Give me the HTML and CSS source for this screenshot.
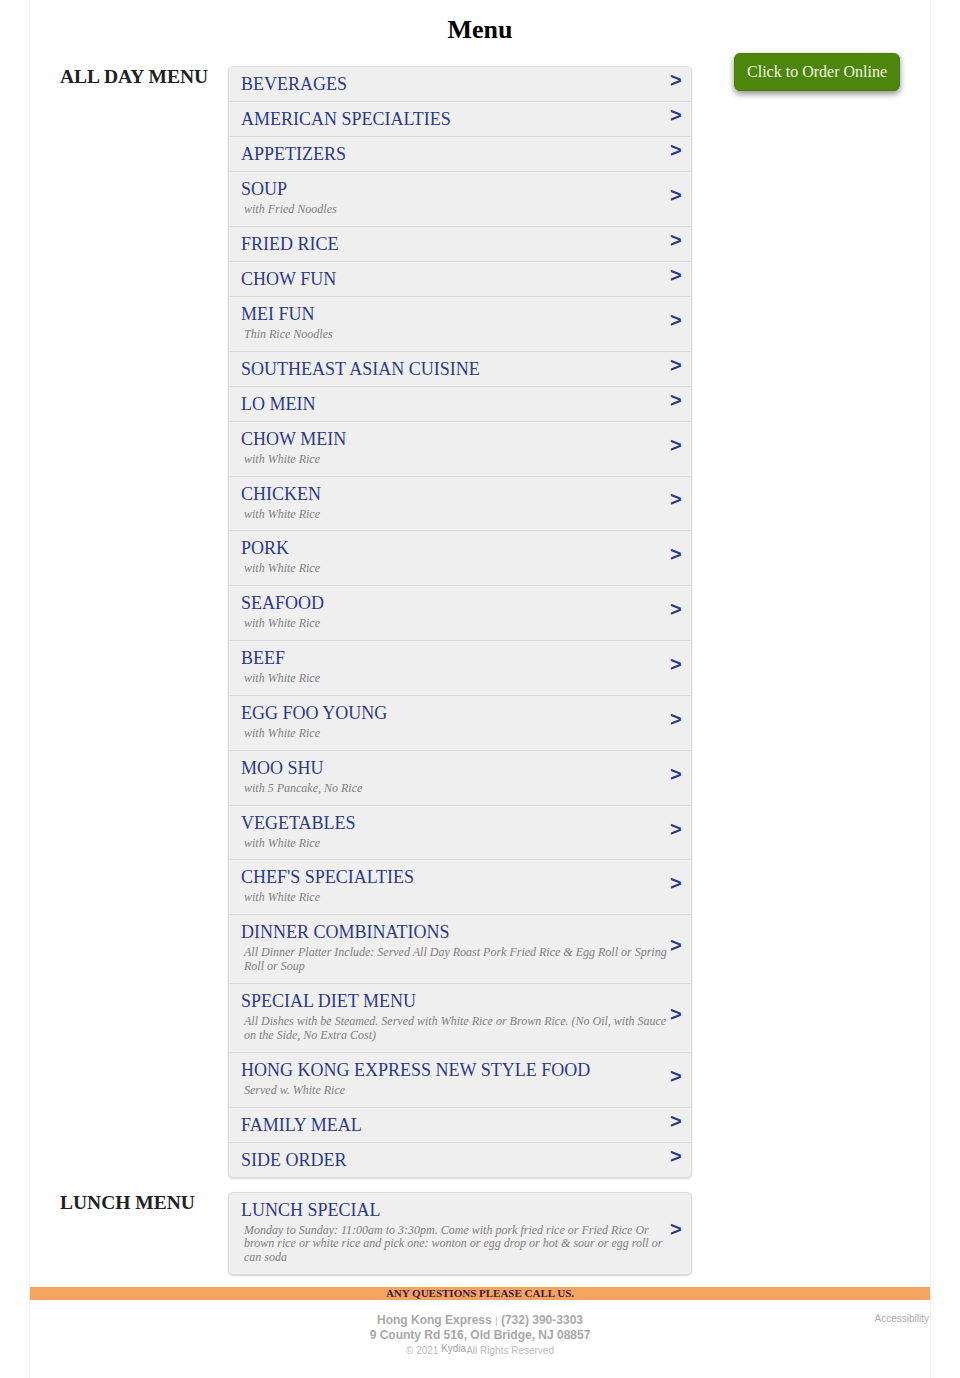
FILE: index.html
```html
<!DOCTYPE html>
<html lang="en">
<head>
<meta charset="utf-8">
<title>Menu - Hong Kong Express</title>
<link rel="stylesheet" href="styles.css">
</head>
<body>
<div class="page">
  <h1 class="page-title">Menu</h1>
  <div class="menu-body">
    <div class="sections">
      <section class="menu-section">
        <h2 class="section-name">ALL DAY MENU</h2>
        <ul class="cat-list">
          <li class="cat"><div class="cat-text"><div class="cat-name">BEVERAGES</div></div><span class="cat-arrow">&gt;</span></li>
          <li class="cat"><div class="cat-text"><div class="cat-name">AMERICAN SPECIALTIES</div></div><span class="cat-arrow">&gt;</span></li>
          <li class="cat"><div class="cat-text"><div class="cat-name">APPETIZERS</div></div><span class="cat-arrow">&gt;</span></li>
          <li class="cat"><div class="cat-text"><div class="cat-name">SOUP</div><div class="cat-desc">with Fried Noodles</div></div><span class="cat-arrow">&gt;</span></li>
          <li class="cat"><div class="cat-text"><div class="cat-name">FRIED RICE</div></div><span class="cat-arrow">&gt;</span></li>
          <li class="cat"><div class="cat-text"><div class="cat-name">CHOW FUN</div></div><span class="cat-arrow">&gt;</span></li>
          <li class="cat"><div class="cat-text"><div class="cat-name">MEI FUN</div><div class="cat-desc">Thin Rice Noodles</div></div><span class="cat-arrow">&gt;</span></li>
          <li class="cat"><div class="cat-text"><div class="cat-name">SOUTHEAST ASIAN CUISINE</div></div><span class="cat-arrow">&gt;</span></li>
          <li class="cat"><div class="cat-text"><div class="cat-name">LO MEIN</div></div><span class="cat-arrow">&gt;</span></li>
          <li class="cat"><div class="cat-text"><div class="cat-name">CHOW MEIN</div><div class="cat-desc">with White Rice</div></div><span class="cat-arrow">&gt;</span></li>
          <li class="cat"><div class="cat-text"><div class="cat-name">CHICKEN</div><div class="cat-desc">with White Rice</div></div><span class="cat-arrow">&gt;</span></li>
          <li class="cat"><div class="cat-text"><div class="cat-name">PORK</div><div class="cat-desc">with White Rice</div></div><span class="cat-arrow">&gt;</span></li>
          <li class="cat"><div class="cat-text"><div class="cat-name">SEAFOOD</div><div class="cat-desc">with White Rice</div></div><span class="cat-arrow">&gt;</span></li>
          <li class="cat"><div class="cat-text"><div class="cat-name">BEEF</div><div class="cat-desc">with White Rice</div></div><span class="cat-arrow">&gt;</span></li>
          <li class="cat"><div class="cat-text"><div class="cat-name">EGG FOO YOUNG</div><div class="cat-desc">with White Rice</div></div><span class="cat-arrow">&gt;</span></li>
          <li class="cat"><div class="cat-text"><div class="cat-name">MOO SHU</div><div class="cat-desc">with 5 Pancake, No Rice</div></div><span class="cat-arrow">&gt;</span></li>
          <li class="cat"><div class="cat-text"><div class="cat-name">VEGETABLES</div><div class="cat-desc">with White Rice</div></div><span class="cat-arrow">&gt;</span></li>
          <li class="cat"><div class="cat-text"><div class="cat-name">CHEF'S SPECIALTIES</div><div class="cat-desc">with White Rice</div></div><span class="cat-arrow">&gt;</span></li>
          <li class="cat"><div class="cat-text"><div class="cat-name">DINNER COMBINATIONS</div><div class="cat-desc">All Dinner Platter Include: Served All Day Roast Pork Fried Rice &amp; Egg Roll or Spring Roll or Soup</div></div><span class="cat-arrow">&gt;</span></li>
          <li class="cat"><div class="cat-text"><div class="cat-name">SPECIAL DIET MENU</div><div class="cat-desc">All Dishes with be Steamed. Served with White Rice or Brown Rice. (No Oil, with Sauce on the Side, No Extra Cost)</div></div><span class="cat-arrow">&gt;</span></li>
          <li class="cat"><div class="cat-text"><div class="cat-name">HONG KONG EXPRESS NEW STYLE FOOD</div><div class="cat-desc">Served w. White Rice</div></div><span class="cat-arrow">&gt;</span></li>
          <li class="cat"><div class="cat-text"><div class="cat-name">FAMILY MEAL</div></div><span class="cat-arrow">&gt;</span></li>
          <li class="cat"><div class="cat-text"><div class="cat-name">SIDE ORDER</div></div><span class="cat-arrow">&gt;</span></li>
        </ul>
      </section>
      <section class="menu-section">
        <h2 class="section-name">LUNCH MENU</h2>
        <ul class="cat-list">
          <li class="cat"><div class="cat-text"><div class="cat-name">LUNCH SPECIAL</div><div class="cat-desc">Monday to Sunday: 11:00am to 3:30pm. Come with pork fried rice or Fried Rice Or brown rice or white rice and pick one: wonton or egg drop or hot &amp; sour or egg roll or can soda</div></div><span class="cat-arrow">&gt;</span></li>
        </ul>
      </section>
    </div>
    <aside class="order">
      <a class="order-btn" href="#">Click to Order Online</a>
    </aside>
  </div>
  <div class="call-bar">ANY QUESTIONS PLEASE CALL US.</div>
  <footer class="site-footer">
    <div class="footer-spacer"></div>
    <div class="footer-info">
      <div class="footer-line">Hong Kong Express <span class="sep">|</span> (732) 390-3303</div>
      <div class="footer-line">9 County Rd 516, Old Bridge, NJ 08857</div>
      <div class="footer-copy">© 2021 <span class="kydia">Kydia</span>All Rights Reserved</div>
    </div>
    <div class="footer-access"><a href="#">Accessibility</a></div>
  </footer>
</div>
</body>
</html>
```
FILE: styles.css
```css
html, body {
  margin: 0;
  padding: 0;
  background: #fff;
}

body {
  font-family: "Liberation Serif", "Times New Roman", serif;
}

.page {
  margin: 0 29px;
  border-left: 1px solid #f1f1f1;
  border-right: 1px solid #f1f1f1;
  min-height: 1378px;
  box-sizing: border-box;
}

.page-title {
  margin: 0;
  padding-top: 14px;
  font-size: 26px;
  line-height: 32px;
  font-weight: bold;
  text-align: center;
  color: #000;
}

.menu-body {
  display: flex;
  margin-top: 7px;
}

.sections {
  display: flex;
  flex-direction: column;
  gap: 14px;
  padding-top: 13px;
  padding-left: 30px;
}

.menu-section {
  display: flex;
  align-items: flex-start;
}

.section-name {
  width: 168px;
  flex-shrink: 0;
  margin: 0;
  font-size: 19.5px;
  line-height: 22px;
  font-weight: bold;
  color: #222;
}

.cat-list {
  list-style: none;
  margin: 0;
  padding: 0;
  width: 464px;
  box-sizing: border-box;
  background: #efefef;
  border: 1px solid #dcdcdc;
  border-radius: 5px;
  box-shadow: 0 1px 2px rgba(0, 0, 0, 0.18);
}

.cat {
  display: flex;
  align-items: center;
  padding: 6px 9px 6px 12px;
  border-top: 1px solid #dadada;
}

.cat:first-child {
  border-top: none;
}

.cat-text {
  flex: 1;
  min-width: 0;
}

.cat-name {
  font-size: 18px;
  line-height: 22px;
  color: #2b3a8e;
}

.cat-desc {
  margin: 3px 0 3px 3px;
  font-size: 12px;
  line-height: 13.85px;
  font-style: italic;
  color: #808080;
}

.cat-arrow {
  flex-shrink: 0;
  width: 12px;
  margin-left: 3px;
  transform: translateY(-4px);
  font-family: "Liberation Sans", Arial, sans-serif;
  font-weight: bold;
  font-size: 20px;
  line-height: 22px;
  color: #2b3990;
}

.order {
  flex: 1;
  display: flex;
  justify-content: flex-end;
  align-items: flex-start;
  padding-right: 30px;
}

.order-btn {
  display: inline-block;
  padding: 9px 12px;
  font-size: 16px;
  line-height: 18px;
  color: #f4f4e8;
  text-decoration: none;
  background: #4c870c;
  border: 1px solid #467d0b;
  border-radius: 6px;
  box-shadow: 0 3px 6px rgba(0, 0, 0, 0.45);
}

.call-bar {
  margin-top: 12px;
  background: #f4a460;
  text-align: center;
  font-size: 11px;
  line-height: 13px;
  font-weight: bold;
  color: #3b1d3b;
}

.site-footer {
  display: grid;
  grid-template-columns: 1fr auto 1fr;
  padding-top: 13px;
  font-family: "Liberation Sans", Arial, sans-serif;
}

.footer-info {
  text-align: center;
}

.footer-line {
  font-size: 12px;
  line-height: 14px;
  font-weight: bold;
  color: #a8a8a8;
}

.footer-line .sep {
  font-weight: normal;
  font-size: 10px;
  color: #b5b5b5;
}

.footer-copy {
  margin-top: 3px;
  font-size: 10px;
  line-height: 12px;
  color: #bbbbbb;
}

.kydia {
  position: relative;
  top: -2px;
  color: #a0a0a0;
}

.footer-access {
  justify-self: end;
  margin-top: 0;
  padding-right: 1px;
  font-size: 10px;
  line-height: 12px;
}

.footer-access a {
  color: #aaaaaa;
  text-decoration: none;
}
```
